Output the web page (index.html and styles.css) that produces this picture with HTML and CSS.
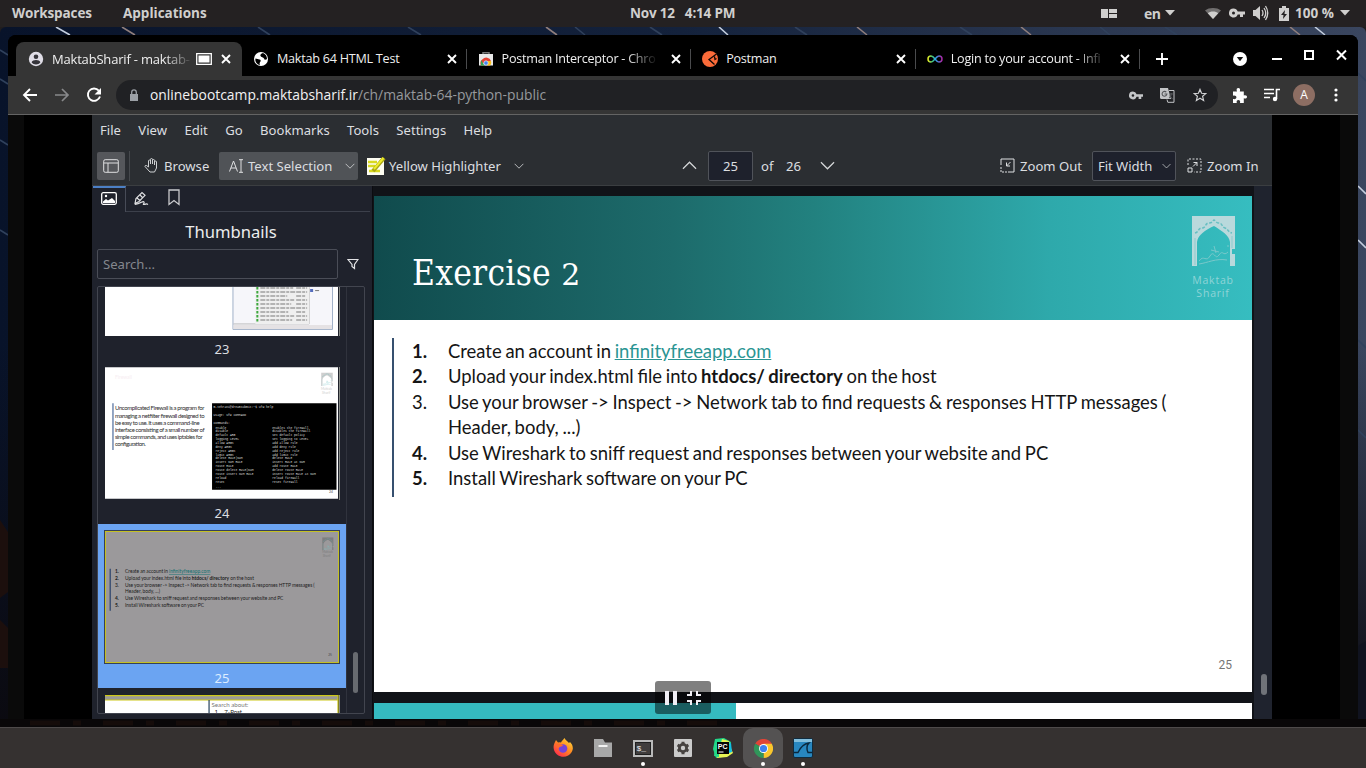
FILE: index.html
```html
<!DOCTYPE html>
<html lang="en">
<head>
<meta charset="utf-8">
<title>MaktabSharif - maktab-64-python-public</title>
<link rel="stylesheet" href="styles.css">
</head>
<body>
<svg width="0" height="0" class="defs">
  <defs>
    <symbol id="x" viewBox="0 0 12 12"><path d="M2 2l8 8M10 2l-8 8" stroke="#fff" stroke-width="1.9"/></symbol>
    <symbol id="key" viewBox="0 0 16 10"><path fill-rule="evenodd" d="M4.5.5a4.5 4.5 0 1 0 4.2 6H11V9h3V6.500h2v-3H8.700A4.500 4.500 0 0 0 4.500.5zm0 3a1.500 1.500 0 1 1 0 3 1.500 1.500 0 0 1 0-3z"/></symbol>
    <symbol id="chev" viewBox="0 0 16 9"><path d="M1 1l7 7 7-7" fill="none" stroke="#d5d7d9" stroke-width="1.300"/></symbol>
    <symbol id="logo" viewBox="0 0 44 50">
      <path fill-rule="evenodd" d="M0 0h43v33h-3v5h3v12h-5V26C37 19 30 15 22 10 13 14 6 19 5 26v24H0z"/>
      <path d="M3 17c4-1 3-5 7-5s3-5 7-5 4-3 5-3 2 3 5 3 3 4 6 5 3 4 7 5" fill="none" stroke="#68bfc2" stroke-width="1.500" stroke-dasharray="3 1.500"/>
      <path d="M3 22v27M40 20v12" stroke="#7cc6c8" stroke-width=".7"/>
      <path d="M7 45c5-7 7 2 11-5s5 5 9-1 4 2 9-3M7 48c8-1 17-6 28-4M19 34l8 2M22 30l2 7M36 29v2" fill="none" stroke="#79c8ca" stroke-width="1"/>
    </symbol>
  </defs>
</svg>

<header class="topbar">
  <span class="t-work">Workspaces</span><span class="t-app">Applications</span>
  <span class="t-clock">Nov 12&nbsp;&nbsp; 4:14 PM</span>
  <div class="tray">
    <svg width="16" height="9" viewBox="0 0 16 9"><path d="M0 0h7v9H0zM8 0h8v4H8zM8 5h8v4H8z"/></svg>
    <span class="t-en">en</span>
    <svg class="tri t1" width="10" height="6" viewBox="0 0 10 6"><path d="M0 0h10L5 5.500z"/></svg>
    <svg class="wifi" width="16" height="13" viewBox="0 0 16 13"><path opacity=".45" d="M0 3.500C4 .2 12 .2 16 3.500L8 12z"/><path d="M2.800 6.200C5 4 11 4 13.200 6.200L8 12z"/></svg>
    <svg class="tkey" width="16" height="10"><use href="#key"/></svg>
    <svg class="vol" width="16" height="16" viewBox="0 0 16 16"><path d="M0 5h2.500L7 1v14l-4.500-4H0z"/><path d="M9 5q2 3 0 6M11 3q3.500 5 0 10M12.500 1q4.500 7 0 14" fill="none" stroke="#d0cfce" stroke-width="1.300"/></svg>
    <svg class="bat" width="10" height="15" viewBox="0 0 10 15"><path fill-rule="evenodd" d="M3 0h4v2h3v13H0V2h3zM6 4L2 9h2.500L4 13l4-5H5.500z"/></svg>
    <span class="t-pct">100 %</span>
    <svg class="tri t2" width="10" height="6" viewBox="0 0 10 6"><path d="M0 0h10L5 5.500z"/></svg>
  </div>
</header>

<main class="desktop">
<svg class="wall" width="1366" height="700" viewBox="0 27 1366 700">
  <defs>
    <linearGradient id="w1"><stop offset="0" stop-color="#08132a"/><stop offset=".5" stop-color="#14223c"/><stop offset="1" stop-color="#3a465f"/></linearGradient>
    <linearGradient id="w2" x1="0" y1="0" x2="0" y2="1"><stop offset=".45" stop-color="#0b0a10" stop-opacity="0"/><stop offset="1" stop-color="#0b0a10"/></linearGradient>
  </defs>
  <path fill="#201d1e" d="M0 27h1366v10H0z"/>
  <rect y="27" width="1366" height="712" rx="6" fill="url(#w1)"/>
  <rect y="27" width="1366" height="700" fill="url(#w2)"/>
  <g stroke-width="1.600">
    <path stroke="#c4cede" d="M56 27l14 8M719 27l9 8M1315 27l10 8M1358 186l8 8M1358 240l8 8"/>
    <path stroke="#907f7d" d="M122 27l13 8M546 27l11 8M857 27l10 8M1021 27l10 8M1290 27l10 8"/>
    <path stroke="#30415c" d="M258 27l12 8M408 27l13 8M575 27l10 8M650 27l12 8M795 27l12 8M960 27l12 8M1100 27l10 8M1165 27l12 8M0 50l8 5M0 79l8 5M0 140l8 5M0 230l8 5M1358 73l8 8M1358 340l8 8M1358 430l8 8"/>
  </g>
  <path fill="#1c0f0d" d="M0 520l8 12v60l-8 6zM0 620l8 8v40H0z"/>
  <path fill="#10131f" d="M1366 641l-8 5v81h8z"/>
  <path fill="#090708" d="M0 719h1366v9H0z"/>
  <path stroke="#150c0a" stroke-width="5" stroke-dasharray="30 13 8 22" d="M30 723h700"/>
</svg>

<section class="window">
  <div class="strip">
    <div class="tab on">
      <svg width="16" height="16" viewBox="0 0 16 16"><circle cx="8" cy="8" r="7.200" fill="#dfdde6"/><circle cx="8" cy="5.700" r="2.300" fill="#35343a"/><path d="M3.600 11.300c1-3.200 7.800-3.200 8.800 0-2 2.900-6.800 2.900-8.800 0z" fill="#35343a"/></svg>
      <span class="tt fade">MaktabSharif - maktab-</span>
      <svg class="cast" width="16" height="12" viewBox="0 0 16 12"><path d="M.7.700h14.600v10.600H.7z" fill="none" stroke="#fff" stroke-width="1.300"/><path d="M2.500 2.500h11v7h-11z" fill="#fff"/></svg>
      <svg class="cl" width="12" height="12"><use href="#x"/></svg>
    </div>
    <div class="tab">
      <svg width="16" height="16" viewBox="0 0 16 16"><circle cx="8" cy="8" r="7" fill="#fff"/><path d="M2.500 7.500c1.500 0 2.500 1 4 1s1.500 1.500.7 2.500-.7 2-.2 3C4 13.500 1.700 10.500 2.500 7.500zM10 2c-2 .5-3 1.500-2.500 3s3 1 3.500 2.500 2 1.500 3 .5c0-3-1.500-5-4-6z" fill="#000"/></svg>
      <span class="tt">Maktab 64 HTML Test</span>
      <svg class="cl" width="12" height="12"><use href="#x"/></svg>
    </div>
    <div class="tab">
      <svg width="16" height="16" viewBox="0 0 16 16"><path d="M5 4V1.700h6V4" fill="none" stroke="#777" stroke-width="1.500"/><path d="M1 3h14v11.500H1z" fill="#e8e8e8"/><path d="M3 14.500a5 5 0 0 1 1.500-6.200A5 5 0 0 1 13 10H8z" fill="#e34133"/><path d="M3 9l3.500 5.500H2.800z" fill="#31a550"/><path d="M9 10h4c.7 2-.2 3.500-1 4.500H9z" fill="#fbc116"/><circle cx="8" cy="12" r="2.200" fill="#4285f4" stroke="#eee" stroke-width=".7"/></svg>
      <span class="tt fade">Postman Interceptor - Chro</span>
      <svg class="cl" width="12" height="12"><use href="#x"/></svg>
    </div>
    <div class="tab">
      <svg width="16" height="16" viewBox="0 0 16 16"><circle cx="8" cy="8" r="8" fill="#fa6b39"/><path d="M14.500 3L7 8.500l5.500 5M12.500 5.500l.5 3 1.500-1" fill="none" stroke="#100906" stroke-width="1.300"/></svg>
      <span class="tt">Postman</span>
      <svg class="cl" width="12" height="12"><use href="#x"/></svg>
    </div>
    <div class="tab">
      <svg width="16" height="16" viewBox="0 0 16 16"><defs><linearGradient id="inf"><stop offset="0" stop-color="#e8ee23"/><stop offset=".3" stop-color="#46c878"/><stop offset=".55" stop-color="#28a7ed"/><stop offset="1" stop-color="#ad25a5"/></linearGradient></defs><path d="M8 8C6 5.300 5 5 4 5a3 3 0 0 0 0 6C5.200 11 6 10.500 8 8s2.800-3 4-3a3 3 0 0 1 0 6C11 11 10 10.700 8 8z" fill="none" stroke="url(#inf)" stroke-width="1.500"/></svg>
      <span class="tt fade">Login to your account - Infi</span>
      <svg class="cl" width="12" height="12"><use href="#x"/></svg>
    </div>
    <svg class="plus" width="12" height="12" viewBox="0 0 12 12"><path d="M6 0v12M0 6h12" stroke="#fff" stroke-width="1.900"/></svg>
    <svg class="drop" width="14" height="14" viewBox="0 0 14 14"><circle cx="7" cy="7" r="7" fill="#fff"/><path d="M3.800 5h6.400L7 9.200z" fill="#111"/></svg>
    <svg class="wctl" width="76" height="12" viewBox="0 0 76 12"><path d="M0 10h10" stroke="#fff" stroke-width="2"/><path d="M33 2h8v8h-8z" fill="none" stroke="#fff" stroke-width="2"/><path d="M65 1.500l9 9M74 1.500l-9 9" stroke="#fff" stroke-width="2"/></svg>
  </div>

  <div class="bar">
    <svg class="nav" width="80" height="16" viewBox="0 0 80 16"><path d="M15 8H2M8 2L2 8l6 6" fill="none" stroke="#fff" stroke-width="1.900"/><path d="M33 8h13M40 2l6 6-6 6" fill="none" stroke="#88898b" stroke-width="1.700"/><path d="M76.800 3.600A6.200 6.200 0 1 0 78 9.500" fill="none" stroke="#fff" stroke-width="1.900"/><path d="M79 1v6.500h-6.500z" fill="#fff"/></svg>
    <div class="omni">
      <svg width="8" height="12" viewBox="0 0 8 12"><path d="M0 5h8v7H0z" fill="#9ba0a6"/><path d="M1.700 5V3.200a2.300 2.300 0 0 1 4.600 0V5" fill="none" stroke="#9ba0a6" stroke-width="1.300"/></svg>
      <span class="url"><b>onlinebootcamp.maktabsharif.ir</b>/ch/maktab-64-python-public</span>
      <svg class="okey" width="14" height="9"><use href="#key"/></svg>
      <svg class="otr" width="15" height="15" viewBox="0 0 15 15"><path d="M0 0h8l3 11H1.500Q0 11 0 9.500z" fill="#c1c3c6"/><path d="M9 2.500h5v11.800H7.800L7 11.500" fill="none" stroke="#c1c3c6" stroke-width="1"/><path d="M6.300 4.200a2.400 2.400 0 1 0 .6 1.800H4.500M9.500 6H13M11.200 5v1.200c0 2-1 3-2 4M9.500 7.500l3 3.500" fill="none" stroke="#55575b" stroke-width="1.100"/></svg>
      <svg width="14" height="14" viewBox="0 0 14 14"><path d="M7 1.400l1.600 3.900 4.200.3-3.200 2.700 1 4.100L7 10.200l-3.600 2.200 1-4.100-3.200-2.700 4.200-.3z" fill="none" stroke="#cfd0d2" stroke-width="1.200"/></svg>
    </div>
    <svg class="puz" width="15" height="15" viewBox="0 0 15 15"><path d="M1 3.500h4C4 1 5 0 6.300 0s2.400 1 1.500 3.500h4v4C14 6.800 15 7.800 15 9s-1.200 2-3.200 1.300V15H8c.6-2-.3-3-1.600-3s-2.200 1-1.600 3H1v-4c2.500.5 3.400-.4 3.400-1.700S3 7.200 1 7.800z" fill="#fff"/></svg>
    <svg class="mus" width="16" height="14" viewBox="0 0 16 14"><path d="M0 1.500h10M0 5.500h10M0 9.500h6M12.500 11V1.500H16" fill="none" stroke="#fff" stroke-width="1.600"/><circle cx="11" cy="11" r="2.200" fill="#fff"/></svg>
    <span class="ava">A</span>
    <svg class="dots" width="4" height="14" viewBox="0 0 4 14" fill="#fff"><circle cx="2" cy="2" r="1.600"/><circle cx="2" cy="7" r="1.600"/><circle cx="2" cy="12" r="1.600"/></svg>
  </div>

  <div class="page"><div class="stage">
    <div class="okular">
      <nav class="menu"><span>File</span><span>View</span><span>Edit</span><span>Go</span><span>Bookmarks</span><span>Tools</span><span>Settings</span><span>Help</span></nav>
      <div class="tools">
        <i class="sqb"><svg width="16" height="14" viewBox="0 0 16 14" fill="none" stroke="#dfe0e2"><rect x=".7" y=".7" width="14.600" height="12.600" rx="1.500"/><path d="M1 4h14M5 4v9"/></svg></i>
        <i class="sep"></i>
        <svg class="hand" width="15" height="15" viewBox="0 0 15 15" fill="none" stroke="#cfd1d3"><path d="M4.500 9V3q0-1 1-1t1 1v3V1.500q0-1 1-1t1 1V6 2.500q0-1 1-1t1 1V7 4q0-1 1-1t1 1v6l-2 4H6L1 8.500q0-1.500 1.500-1z"/></svg>
        <span class="x-browse">Browse</span>
        <div class="sel"><svg width="15" height="14" viewBox="0 0 15 14" fill="none" stroke="#dfe0e2"><path d="M.5 12.500L4.500 2l4 10.500M2 9h5M10 .7h4M12 .7v12.600M10 13.300h4"/></svg><span>Text Selection</span><svg class="ch" width="10" height="6"><use href="#chev"/></svg></div>
        <svg class="hl" width="19" height="18" viewBox="0 0 19 18"><path d="M0 1h17v17H0z" fill="#fdfdf2"/><path d="M1 5h9M1 9h7M2 14h11" stroke="#d9d91f" stroke-width="2.500"/><path d="M17 1L6 14" stroke="#aaa713" stroke-width="4"/><path d="M16.500 1L7 12" stroke="#eded2c" stroke-width="2"/></svg>
        <span class="x-yel">Yellow Highlighter</span>
        <svg class="ch2" width="10" height="6"><use href="#chev"/></svg>
        <svg class="up" width="15" height="9"><use href="#chev"/></svg>
        <span class="pg">25</span><span class="x-of">of</span><span class="x-26">26</span>
        <svg class="dn" width="15" height="9"><use href="#chev"/></svg>
        <svg class="zo" width="15" height="15" viewBox="0 0 15 15" fill="none" stroke="#dfe0e2"><path d="M1 7V1h13v13H8"/><path d="M1 9v5h6" stroke-dasharray="2 1"/><path d="M10.500 4L6.500 8M6.500 4.500V8H10"/></svg>
        <span class="x-zo">Zoom Out</span>
        <span class="fit"><span>Fit Width</span><svg width="9" height="6"><use href="#chev"/></svg></span>
        <svg class="zi" width="15" height="15" viewBox="0 0 15 15" fill="none" stroke="#dfe0e2"><path d="M1 7V1h13v13H7" stroke-dasharray="2 1.500"/><path d="M1 10h4v4H1zM6 8.500l4-4M6.500 4.500H10V8"/></svg>
        <span class="x-zi">Zoom In</span>
      </div>
      <div class="body">
        <aside class="side">
          <div class="stabs">
            <i class="cur"><svg width="16" height="13" viewBox="0 0 16 13"><rect x=".7" y=".7" width="14.600" height="11.600" rx="1.500" fill="none" stroke="#fff" stroke-width="1.300"/><path d="M2 11V9.500L5 7l2 1.500L11 6l3 3v2z" fill="#fff"/><circle cx="5" cy="4" r="1.200" fill="#fff"/></svg></i>
            <svg class="pen" width="15" height="15" viewBox="0 0 15 15" fill="none" stroke="#dfe0e2" stroke-width="1.200"><path d="M1 12.500l1-5L8 1.500l3 2.800-6 6.200zM3 7l3.500 3M6 4l3 3M1 13.500c6-1 8-4 9-2.500s-2 2.500 0 2.500 2-1.500 4 0"/></svg>
            <svg class="bm" width="12" height="17" viewBox="0 0 12 17"><path d="M1 1h10v14.500L6 11.500l-5 4z" fill="none" stroke="#c9cacd" stroke-width="1.300"/></svg>
          </div>
          <h2>Thumbnails</h2>
          <div class="srch"><span>Search...</span><svg width="12" height="12" viewBox="0 0 12 12"><path d="M1 1.500h10L7.500 6.500v4L5 8.500v-2z" fill="none" stroke="#e2e3e5" stroke-width="1.200"/></svg></div>
          <div class="list">
            <div class="thumbs">
              <svg class="th23" width="235" height="49" viewBox="0 0 235 49">
                <path d="M0 0h234v49H0z" fill="#fff"/>
                <path d="M128.500 0v42.500h100V0" fill="#f6f6fa" stroke="#9fafc8"/><path d="M205 0v37h-76" fill="none" stroke="#bbb"/>
                <path d="M151 0h54v37h-54z" fill="#efefef"/><path d="M129 38h99v4h-99z" fill="#e5e2e4"/>
                <path d="M153 0v35" stroke="#3da83d" stroke-width="2" stroke-dasharray="2.500 1.500"/>
                <path d="M156 1h33M156 5h35M156 9h27M156 13h34M156 17h31M156 21h35M156 25h28M156 29h34M156 33h32M192 1h11M192 5h11M192 9h9M192 13h11M192 17h11M192 21h11M192 25h9M192 29h11M192 33h11" stroke="#a0a0a0" stroke-width="1.500" stroke-dasharray="5 1 3 1"/>
                <path d="M206 2h3v3h-3z" fill="#556dbd"/><path d="M211 3.500h4" stroke="#777"/>
              </svg>
              <div class="lab l23">23</div>
              <svg class="th24" width="235" height="133" viewBox="0 0 235 133">
                <path d="M0 0h234v132H0z" fill="#fff"/>
                <text x="10" y="12" font-size="5" fill="#f7eef2">Firewall</text>
                <path d="M8 36v47" stroke="#4c6a9b" stroke-width="1.200"/>
                <g font-size="6.050" fill="#303030"><text x="10" y="43.300" textLength="90">Uncomplicated Firewall is a program for</text><text x="10" y="50.500" textLength="90">managing a netfilter firewall designed to</text><text x="10" y="57.500" textLength="85">be easy to use. It uses a command-line</text><text x="10" y="65" textLength="90">interface consisting of a small number of</text><text x="10" y="72" textLength="88">simple commands, and uses iptables for</text><text x="10" y="79" textLength="31">configuration.</text></g>
                <path d="M107.500 36h125v87h-125z" fill="#000"/>
                <g class="mono"><text x="109" y="41">m-tehrani@dreamsubmit:~$ ufw help</text><text x="109" y="49">Usage: ufw COMMAND</text><text x="109" y="57">Commands:</text>
                <text x="111" y="61.500">enable</text><text x="168" y="61.500">enables the firewall</text><text x="111" y="65">disable</text><text x="168" y="65">disables the firewall</text><text x="111" y="69">default ARG</text><text x="168" y="69">set default policy</text><text x="111" y="73.500">logging LEVEL</text><text x="168" y="73.500">set logging to LEVEL</text><text x="111" y="77">allow ARGS</text><text x="168" y="77">add allow rule</text><text x="111" y="81">deny ARGS</text><text x="168" y="81">add deny rule</text><text x="111" y="85">reject ARGS</text><text x="168" y="85">add reject rule</text><text x="111" y="89">limit ARGS</text><text x="168" y="89">add limit rule</text><text x="111" y="92.500">delete RULE|NUM</text><text x="168" y="92.500">delete RULE</text><text x="111" y="96.500">insert NUM RULE</text><text x="168" y="96.500">insert RULE at NUM</text><text x="111" y="100.500">route RULE</text><text x="168" y="100.500">add route RULE</text><text x="111" y="104.500">route delete RULE|NUM</text><text x="168" y="104.500">delete route RULE</text><text x="111" y="108">route insert NUM RULE</text><text x="168" y="108">insert route RULE at NUM</text><text x="111" y="112.500">reload</text><text x="168" y="112.500">reload firewall</text><text x="111" y="116">reset</text><text x="168" y="116">reset firewall</text><text x="111" y="121">...</text></g>
                <g fill="#cfcfcf"><svg x="217" y="5" width="12" height="14"><use href="#logo"/></svg><text x="217" y="23" font-size="3.300">Maktab</text><text x="218" y="27" font-size="3.300">Sharif</text></g>
                <text x="225" y="126" font-size="3.500" fill="#555">24</text>
              </svg>
              <div class="lab l24">24</div>
              <div class="cursel">
                <svg class="th25" width="232" height="130" viewBox="0 0 878 496" preserveAspectRatio="none">
                  <path d="M16 140v160" stroke="#344b70" stroke-width="5"/>
                  <g font-size="18.450" word-spacing="-1" fill="#1c1c1c"><g font-weight="bold"><text x="34" y="158">1.</text><text x="34" y="185">2.</text><text x="34" y="260">4.</text><text x="34" y="286">5.</text></g><text x="34" y="209">3.</text>
                  <text x="72" y="158">Create an account in <tspan fill="#0f6f6f" text-decoration="underline">infinityfreeapp.com</tspan></text><text x="72" y="185">Upload your index.html file into <tspan font-weight="bold">htdocs/ directory</tspan> on the host</text><text x="72" y="209">Use your browser -&gt; Inspect -&gt; Network tab to find requests &amp; responses HTTP messages (</text><text x="72" y="234">Header, body, ...)</text><text x="72" y="260">Use Wireshark to sniff request and responses between your website and PC</text><text x="72" y="286">Install Wireshark software on your PC</text></g>
                  <g fill="#7e7e7f"><svg x="818" y="20" width="44" height="50"><use href="#logo"/></svg><text x="818" y="82" font-size="12">Maktab</text><text x="820" y="97" font-size="12">Sharif</text></g>
                  <text x="841" y="472" font-size="12" fill="#444">25</text>
                </svg>
                <div class="lab l25">25</div>
              </div>
              <svg class="th26" width="235" height="18" viewBox="0 0 235 18"><path d="M0 0h234v18H0z" fill="#fff"/><path d="M0 1h234v4H0z" fill="#9b9997"/><path d="M0 .6h234v17.400M0 5h234" fill="none" stroke="#cdc819" stroke-width="1.200"/><path d="M104.500 5v13" stroke="#243f5a" stroke-width="1.200"/><text x="107" y="12.500" font-size="6.200" fill="#777">Search about:</text><text x="110" y="19" font-size="6.200" fill="#222">1.&#160;&#160; 7-Post</text></svg>
            </div>
            <div class="sbar"><i></i></div>
          </div>
        </aside>
        <div class="doc">
          <article class="slide">
            <div class="head">
              <h1>Exercise <small>2</small></h1>
              <div class="brand"><svg width="44" height="50" fill="#b9d9dc"><use href="#logo"/></svg><span>Maktab</span><span>Sharif</span></div>
            </div>
            <ol>
              <li><b>1.</b><span>Create an account in <a>infinityfreeapp.com</a></span></li>
              <li><b>2.</b><span>Upload your index.html file into <strong>htdocs/ directory</strong> on the host</span></li>
              <li><em>3.</em><span>Use your browser -&gt; Inspect -&gt; Network tab to find requests &amp; responses HTTP messages (<br>Header, body, ...)</span></li>
              <li><b>4.</b><span>Use Wireshark to sniff request and responses between your website and PC</span></li>
              <li><b>5.</b><span>Install Wireshark software on your PC</span></li>
            </ol>
            <span class="no">25</span>
          </article>
          <article class="next"></article>
        </div>
        <div class="dbar"><i></i></div>
      </div>
    </div>
  </div></div>
  <div class="pip"><svg width="36" height="14" viewBox="0 0 36 14"><path d="M0 0h4v14H0zM8 0h4v14H8z" fill="#f0eef4"/><path d="M22 4h4V0M36 4h-4V0M22 10h4v4M36 10h-4v4" fill="none" stroke="#f0eef4" stroke-width="2"/></svg></div>
</section>
</main>

<footer class="dock">
  <i><svg width="20" height="20" viewBox="0 0 20 20"><defs><linearGradient id="ff" x1="1" y1="0" x2=".2" y2="1"><stop stop-color="#ffe63d"/><stop offset=".5" stop-color="#ff8b22"/><stop offset="1" stop-color="#ff264f"/></linearGradient></defs><path d="M1.500 5L3 2l2 2.500Q7 4 8 4.500C9 2.500 11 1 11.500 0c.5 2 3 3 4.500 5l1-1c2 2 3 4 2.800 7A9.700 9.700 0 1 1 1.500 5z" fill="url(#ff)"/><circle cx="10" cy="10.500" r="4.300" fill="#7543d8"/><path d="M3 6c3-1 5 0 7 1.500-1 1.500-4 1-4.500 3-1-1-2-2-2.500-4.500z" fill="#ff6a2c"/></svg></i>
  <i><svg width="18" height="18" viewBox="0 0 18 18"><path d="M0 0h9l2 3.500h7V18H0z" fill="#a8a8a8"/><path d="M4.500 7h9" stroke="#f2f2f2" stroke-width="2"/></svg></i>
  <i class="run"><svg width="20" height="17" viewBox="0 0 20 17"><rect x="1" y="1" width="18" height="15" fill="#403d3d" stroke="#b9b9b9" stroke-width="2"/><rect x="2.500" y="2.500" width="15" height="12" fill="none" stroke="#1f1f1f"/><text x="3.500" y="10.500" font-size="8" fill="#eee" font-family="Liberation Mono,monospace">$_</text></svg></i>
  <i><svg width="18" height="18" viewBox="0 0 18 18"><rect width="18" height="18" rx="1" fill="#cbcbcb"/><circle cx="9" cy="9" r="3.600" fill="none" stroke="#474341" stroke-width="2.800"/><path d="M9 2.800v2.500M9 12.700v2.500M3.600 6l2.100 1.200M12.300 10.800l2.100 1.200M3.600 12l2.100-1.200M12.300 7.200L14.400 6" stroke="#474341" stroke-width="3"/></svg></i>
  <i><svg width="20" height="20" viewBox="0 0 20 20"><path d="M2 1l9-1 7 4-2 14-13 2-3-9z" fill="#21d789"/><path d="M9 1l7 2 1 5 3 7-6 4-10 1z" fill="#e7f553"/><path d="M15 6l3-1 1 9-3 1z" fill="#10bfe2"/><path d="M2 8l4-4v15l-5-1z" fill="#24d987"/><path d="M4 4h12v12H4z" fill="#050505"/><text x="4.800" y="11" font-size="7" font-weight="bold" fill="#fff" font-family="Liberation Sans,sans-serif">PC</text><path d="M5.500 14h5" stroke="#fff"/></svg></i>
  <i class="act run"><svg width="19" height="19" viewBox="0 0 20 20"><path d="M10 10L1.300 5A10 10 0 0 1 18.700 5z" fill="#df4437"/><path d="M10 10l8.700-5A10 10 0 0 1 10 20z" fill="#f9c62d"/><path d="M10 10v10A10 10 0 0 1 1.300 5z" fill="#30965a"/><path d="M10 5h8.700L14 12l-4 8 4-8z" fill="#f9c62d"/><circle cx="10" cy="10" r="4.700" fill="#fff"/><circle cx="10" cy="10" r="3.800" fill="#3c80ee"/></svg></i>
  <i class="run"><svg width="20" height="20" viewBox="0 0 20 20"><rect x=".5" y=".5" width="19" height="19" rx="1.500" fill="#2887c0" stroke="#102c3f"/><path d="M1 1h18v3H1z" fill="#82bedc"/><path d="M1 14.500h4C7 10 10 6 16 5c-3 3-2.500 6-1 9.500h4" fill="none" stroke="#09283e" stroke-width="1.400"/></svg></i>
</footer>
</body>
</html>
```

FILE: styles.css
```css
* { box-sizing: border-box; }
body { margin: 0; width: 1366px; height: 768px; overflow: hidden; background: #000; font-family: "Open Sans", "Noto Sans", sans-serif; }
svg { display: block; flex: none; }
i, em { font-style: normal; }
.defs { position: absolute; }

/* system bar */
.topbar { height: 27px; padding-bottom: 1px; background: #242122; color: #d0cfce; display: grid; grid-template-columns: 12px 111px 507px 1fr 257px; align-items: center; font-weight: 700; font-size: 13.5px; line-height: 25px; white-space: nowrap; }
.t-work { grid-column: 2; letter-spacing: -.1px; }
.t-clock { letter-spacing: -.18px; }
.tray { height: 26px; width: 265px; margin-left: -8px; display: flex; align-items: center; fill: #d0cfce; }
.t-en { margin-left: 27px; width: 17px; font-size: 14px; letter-spacing: -.4px; }
.t1 { margin-left: 4px; }
.wifi { margin-left: 30px; }
.tkey { margin-left: 8px; }
.vol { margin-left: 8px; }
.bat { margin-left: 10px; }
.t-pct { margin-left: 6px; width: 40px; }
.t2 { margin-left: 5px; }

.desktop { height: 700px; position: relative; }
.wall { position: absolute; inset: 0; }
.window { position: relative; width: 1350px; height: 684px; margin: 0 8px; top: 8px; border-radius: 8px 8px 0 0; overflow: hidden; background: #000; }

/* tab strip */
.strip { height: 41px; background: #000; display: flex; padding: 7px 0 0 8px; }
.tab { position: relative; flex: none; width: 224.6px; height: 34px; display: flex; align-items: center; padding: 0 9px 0 11px; }
.tab .tt { flex: 1; margin-left: 8px; font-size: 12.6px; line-height: 18px; padding-bottom: 1px; color: #efefef; white-space: nowrap; overflow: hidden; letter-spacing: -.24px; }
.tab .cl { margin-left: 12px; }
.tab .cast { margin-left: 3px; }
.tab .cast + .cl { margin-left: 8px; }
.fade { -webkit-mask-image: linear-gradient(90deg, #000 80%, transparent); mask-image: linear-gradient(90deg, #000 80%, transparent); }
.tab:not(.on) { background: linear-gradient(#4a4b4d, #4a4b4d) right 7px / 1px 20px no-repeat; }
.tab.on { width: 226px; padding: 0 10px 0 12px; background: #353535; border-radius: 8px 8px 0 0; }
.tab.on .tt { font-size: 13px; letter-spacing: -.19px; }
.plus { margin: 11px 0 0 16px; }
.drop { margin: 10px 0 0 65px; }
.wctl { margin: 7px 0 0 25px; }

/* address bar */
.bar { height: 38px; background: #353535; display: flex; align-items: center; padding-left: 14px; }
.nav { margin-right: 14px; }
.omni { width: 1102px; height: 30px; border-radius: 15px; background: #202124; display: flex; align-items: center; padding: 0 11px 0 14px; }
.url { margin-left: 12px; flex: 1; font-size: 13.87px; line-height: 20px; padding-bottom: 1px; color: #96999d; white-space: nowrap; }
.url b { font-weight: 400; color: #f2f2f3; }
.okey { fill: #c4c6c8; }
.okey { margin-right: 17px; }
.otr { margin-right: 18px; }
.puz { margin-left: 14px; }
.mus { margin-left: 17px; }
.ava { margin-left: 13px; width: 22px; height: 22px; border-radius: 50%; background: #8d6e63; color: #fff; font-size: 12px; line-height: 22px; text-align: center; }
.dots { margin-left: 19px; }

/* video stage */
.page { height: 605px; background: #0a0a0a; border-top: 1px solid #646464; padding: 0 18px 0 16px; }
.stage { height: 604px; background: #000; padding: 0 68px; }
.okular { width: 1180px; height: 604px; background: #2b2e32; color: #dcdee0; font-family: "Noto Sans", sans-serif; font-size: 13.1px; }
.menu { height: 31px; padding-left: 8px; display: flex; gap: 17.4px; line-height: 31px; white-space: nowrap; }
.tools { height: 39px; display: flex; align-items: center; white-space: nowrap; }
.tools > span { flex: none; }
.sqb { flex: none; width: 28px; height: 28px; margin-left: 5px; border-radius: 2px; background: #55575b; display: grid; place-items: center; }
.sep { flex: none; width: 1px; height: 30px; margin-left: 4px; background: #46494d; }
.hand { margin-left: 14px; }
.x-browse { margin-left: 5px; width: 55px; }
.sel { flex: none; width: 139px; height: 28px; border-radius: 2px; background: #505357; display: flex; align-items: center; padding: 0 3px 0 10px; }
.sel span { margin-left: 4px; flex: 1; }
.hl { margin-left: 9px; }
.x-yel { margin-left: 3px; width: 125px; }
.up { margin-left: 158px; transform: scaleY(-1); }
.pg { margin-left: 11px; width: 45px; height: 30px; border: 1px solid #50535a; background: #1e212c; line-height: 28px; text-align: center; border-radius: 2px; }
.x-of { margin-left: 8px; width: 25px; }
.x-26 { width: 34px; }
.zo { margin-left: 165px; }
.x-zo { margin-left: 5px; width: 72px; }
.fit { width: 84px; height: 30px; border: 1px solid #50535a; background: #1e212c; border-radius: 2px; display: flex; align-items: center; justify-content: space-between; padding: 0 4px 0 5px; letter-spacing: -.05px; }
.zi { margin-left: 11px; }
.x-zi { margin-left: 5px; }
.body { height: 534px; display: flex; border-top: 1px solid #3b3e41; }

/* sidebar */
.side { width: 280px; height: 533px; background: #1f222c; }
.stabs { height: 26px; display: flex; background: linear-gradient(#3c404b, #3c404b) 33px 25px / 245px 1px no-repeat; }
.cur { width: 33px; margin-left: 1px; padding-bottom: 3px; border-top: 2px solid #4c80c6; border-right: 1px solid #474b57; display: grid; place-items: center; }
.pen { margin: 5px 0 0 8px; }
.bm { margin: 3px 0 0 19px; }
.side h2 { margin: 0; height: 37px; font-size: 16.6px; font-weight: 400; line-height: 39px; text-align: center; padding-right: 2px; color: #eceded; }
.srch { display: flex; align-items: center; height: 30px; padding-left: 5px; }
.srch span { width: 241px; height: 30px; border: 1px solid #4a4d57; border-radius: 2px; line-height: 28px; padding-left: 5px; color: #84878e; margin-right: 9px; }
.list { margin: 7px 0 0 5px; width: 268px; height: 428px; border: 1px solid #42454f; border-radius: 2px; display: flex; overflow: hidden; }
.thumbs { width: 249px; height: 426px; border-right: 1px solid #30333d; overflow: hidden; }
.thumbs text { font-family: Lato, sans-serif; }
.thumbs .mono text { font-family: "Liberation Mono", monospace; font-size: 3.05px; fill: #dedede; }
.th23, .th24, .th26 { margin-left: 7px; border-right: 1px solid #878a86; }
.lab { text-align: center; font-size: 13px; line-height: 18px; }
.l23 { height: 31px; padding-top: 4px; }
.l24 { height: 24px; padding-top: 4px; }
.cursel { width: 248px; height: 164px; background: #6ba4f2; padding: 6px 0 0 6px; }
.th25 { box-sizing: content-box; background: #9b999b; border: 2px solid #c5c023; outline: 1px solid #34405a; outline-offset: -1px; }
.l25 { color: #dcecff; padding-top: 5px; margin-left: -6px; }
.th26 { margin-top: 7px; }
.sbar { flex: 1; }
.sbar i { display: block; width: 5px; height: 41px; margin: 365px 0 0 6px; border-radius: 3px; background: #686b70; }

/* document */
.doc { width: 882px; height: 533px; background: #111318; padding: 10px 2px 0; overflow: hidden; box-shadow: inset 1px 0 #0b0c10; }
.slide { position: relative; width: 878px; height: 496px; background: #fff; color: #151515; }
.head { height: 124px; display: flex; justify-content: space-between; background: linear-gradient(90deg, #104b4d, #1d6b6b 34%, #22817f 50%, #2ea9ab 77%, #36bdc0); }
.head h1 { margin: 49px 0 0 38px; font: 400 35px/56px "DejaVu Serif Condensed", "DejaVu Serif", serif; font-stretch: condensed; color: #fff; white-space: nowrap; letter-spacing: .25px; }
.head small { font: 400 30px "DejaVu Serif", serif; font-stretch: normal; }
.brand { width: 52px; margin: 20px 13px 0 0; color: #8fd4d7; font: 11px/13px "Open Sans", sans-serif; letter-spacing: .8px; text-align: center; }
.brand svg { margin: 0 0 8px 5px; }
.brand span { display: block; height: 12.5px; font-size: 10.5px; line-height: 12.5px; }
.slide ol { margin: 18px 0 0 18px; padding: 1px 0 0 18px; height: 159px; border-left: 2px solid #36506f; list-style: none; font: 18.45px/25.4px Lato, sans-serif; word-spacing: -1px; }
.slide li { display: flex; white-space: nowrap; }
.slide li b, .slide li em { width: 36px; }
.slide a { color: #2a9593; text-decoration: underline; }
.no { position: absolute; right: 20px; bottom: 17px; font: 12px/20px Roboto, sans-serif; color: #757575; }
.next { height: 17px; margin-top: 11px; width: 878px; background: linear-gradient(90deg, #35bac0 362px, #fff 362px); }
.dbar { width: 18px; background: #1f232e; }
.dbar i { display: block; width: 6px; height: 21px; margin: 488px 0 0 7px; border-radius: 3px; background: #707379; }

.pip { position: absolute; left: 647px; top: 646px; width: 56px; height: 33px; border-radius: 3px; background: rgba(0,0,0,.5); display: grid; place-items: center; }

/* dock */
.dock { position: relative; height: 41px; background: #353130; border-top: 1px solid #4e4a4a; display: flex; padding-left: 543px; }
.dock i { position: relative; width: 40px; height: 40px; display: grid; place-items: center; }
.dock .run::after { content: ""; position: absolute; left: 18px; bottom: 2px; width: 4px; height: 4px; border-radius: 50%; background: #fff; }
.dock .act { background: #545252; border-radius: 10px; }
```
